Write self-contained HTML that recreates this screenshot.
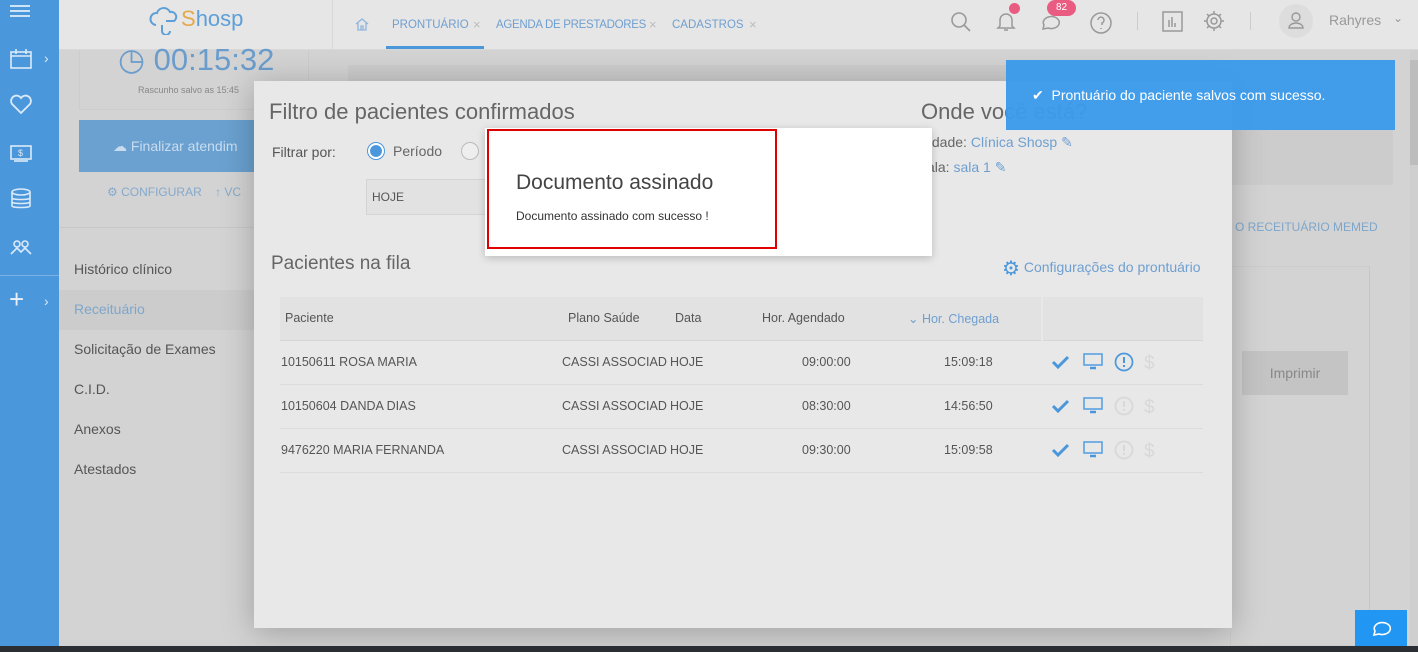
<!DOCTYPE html>
<html><head><meta charset="utf-8"><style>
*{box-sizing:border-box;margin:0;padding:0}
body{width:1418px;height:652px;overflow:hidden;position:relative;background:#d3d3d3;font-family:"Liberation Sans",sans-serif;color:#555}
.a{position:absolute;white-space:nowrap}
.side{left:0;top:0;width:59px;height:646px;background:#4a97dc}
.side svg{position:absolute;left:9px}
.hdr{left:59px;top:0;width:1359px;height:50px;background:#e6e6e6;border-bottom:1px solid #d8d8d8}
.tab{font-size:12px;color:#6f9fd0;top:19px}
.x{color:#bbb;font-size:13px;top:17px}
.c{font-size:12.5px;color:#555}
</style></head><body>
<div class="a side">
 <div class="a" style="left:10px;top:5px;width:20px;height:2px;background:#cfe3f6;box-shadow:0 5px 0 #cfe3f6,0 10px 0 #cfe3f6"></div>
 <svg style="top:48px" width="24" height="22" viewBox="0 0 24 22" fill="none" stroke="#dbeaf8" stroke-width="1.6"><rect x="2" y="4" width="20" height="16"/><path d="M2 8h20M7 1v5M17 1v5"/></svg>
 <div class="a" style="left:44px;top:50px;color:#dbeaf8;font-size:14px">›</div>
 <svg style="top:93px" width="24" height="22" viewBox="0 0 24 22" fill="none" stroke="#dbeaf8" stroke-width="1.8"><path d="M12 20L3 11a5 5 0 0 1 9-6a5 5 0 0 1 9 6z"/></svg>
 <svg style="top:143px" width="24" height="20" viewBox="0 0 24 20" fill="none" stroke="#dbeaf8" stroke-width="1.6"><rect x="2" y="3" width="20" height="13"/><path d="M5 18h14"/><text x="9" y="13" font-size="9" fill="#dbeaf8" stroke="none">$</text></svg>
 <svg style="top:188px" width="24" height="22" viewBox="0 0 24 22" fill="none" stroke="#dbeaf8" stroke-width="1.6"><ellipse cx="12" cy="4" rx="9" ry="3"/><path d="M3 4v14c0 2 18 2 18 0V4M3 10c0 2 18 2 18 0M3 14c0 2 18 2 18 0"/></svg>
 <svg style="top:236px" width="24" height="22" viewBox="0 0 24 22" fill="none" stroke="#dbeaf8" stroke-width="1.6"><circle cx="8" cy="8" r="3"/><circle cx="16" cy="8" r="3"/><path d="M2 18l6-6 4 4 4-4 6 6"/></svg>
 <div class="a" style="left:0;top:275px;width:59px;height:1px;background:#7bb3e6"></div>
 <div class="a" style="left:9px;top:286px;color:#e6f0fa;font-size:26px;line-height:26px">+</div>
 <div class="a" style="left:44px;top:293px;color:#dbeaf8;font-size:14px">›</div>
</div>
<div class="a hdr">
 <div class="a" style="left:273px;top:0;width:1px;height:50px;background:#d8d8d8"></div>
 <svg class="a" style="left:89px;top:5px" width="32" height="30" viewBox="0 0 32 30" fill="none" stroke="#5c9fd9" stroke-width="2"><path d="M8 20a6 6 0 0 1 1-12a7 7 0 0 1 13-1a5 5 0 0 1 4 9H18M14 20v6a4 4 0 0 0 8 0"/></svg>
 <div class="a" style="left:122px;top:6px;font-size:22px;color:#5c9fd9"><span style="color:#e4a94c">S</span>hosp</div>
 <svg class="a" style="left:296px;top:17px" width="14" height="14" viewBox="0 0 14 14" fill="none" stroke="#8fb6dc" stroke-width="1.3"><path d="M1 7l6-5 6 5M3 6v7h8V6M6 13V9h2v4"/></svg>
 <div class="a tab" style="left:333px;font-size:11.5px">PRONTUÁRIO</div><div class="a x" style="left:414px">×</div>
 <div class="a" style="left:327px;top:46px;width:98px;height:3px;background:#4a97dc"></div>
 <div class="a tab" style="left:437px;font-size:11.5px;letter-spacing:-.3px">AGENDA DE PRESTADORES</div><div class="a x" style="left:590px">×</div>
 <div class="a tab" style="left:613px;font-size:11.5px">CADASTROS</div><div class="a x" style="left:690px">×</div>
 <svg class="a" style="left:890px;top:10px" width="24" height="24" fill="none" stroke="#999" stroke-width="1.6"><circle cx="10" cy="10" r="7"/><path d="M15 15l6 6"/></svg>
 <svg class="a" style="left:937px;top:10px" width="20" height="22" fill="none" stroke="#999" stroke-width="1.5"><path d="M4 16V10a6 6 0 0 1 12 0v6l2 2H2zM8 20h4"/></svg>
 <div class="a" style="left:950px;top:3px;width:11px;height:11px;border-radius:50%;background:#ea5b82"></div>
 <svg class="a" style="left:980px;top:12px" width="24" height="20" fill="none" stroke="#999" stroke-width="1.5"><path d="M4 17l1-4a8 6 0 1 1 4 3z"/></svg>
 <div class="a" style="left:988px;top:0;width:29px;height:16px;border-radius:8px;background:#ea5b82;color:#fff;font-size:10px;text-align:center;line-height:15px">82</div>
 <svg class="a" style="left:1030px;top:11px" width="24" height="24" fill="none" stroke="#999" stroke-width="1.5"><circle cx="12" cy="12" r="10"/><path d="M9 9a3 3 0 1 1 4 3v2M12 17v1"/></svg>
 <div class="a" style="left:1078px;top:12px;width:1px;height:18px;background:#ccc"></div>
 <svg class="a" style="left:1103px;top:11px" width="22" height="22" fill="none" stroke="#999" stroke-width="1.5"><rect x="1" y="1" width="19" height="19"/><path d="M7 16V9M10 16V6M13 16v-4"/></svg>
 <svg class="a" style="left:1143px;top:9px" width="24" height="24" fill="none" stroke="#999" stroke-width="1.5"><circle cx="12" cy="12" r="3"/><path d="M12 2v3M12 19v3M2 12h3M19 12h3M5 5l2 2M17 17l2 2M5 19l2-2M17 7l2-2"/><circle cx="12" cy="12" r="7"/></svg>
 <div class="a" style="top:12px;width:1px;height:18px;background:#ccc;left:1191px"></div>
 <div class="a" style="left:1220px;top:4px;width:34px;height:34px;border-radius:50%;background:#ddd"></div>
 <svg class="a" style="left:1228px;top:10px" width="18" height="20" fill="none" stroke="#999" stroke-width="1.4"><circle cx="9" cy="7" r="4"/><path d="M2 18a7 5 0 0 1 14 0z"/></svg>
 <div class="a" style="left:1270px;top:12px;font-size:14px;color:#999">Rahyres</div>
 <div class="a" style="left:1334px;top:11px;font-size:12px;color:#999">⌄</div>
</div>
<!-- background page (dimmed) -->
<div class="a" style="left:79px;top:50px;width:230px;height:60px;border:1px solid #ccc;border-top:0"></div>
<div class="a" style="left:118px;top:42px;font-size:31px;color:#6a9ccc">◷ 00:15:32</div>
<div class="a" style="left:138px;top:85px;font-size:9px;color:#888">Rascunho salvo as 15:45</div>
<div class="a" style="left:79px;top:120px;width:180px;height:52px;background:#6aa1d0"></div>
<div class="a" style="left:113px;top:138px;font-size:14px;color:#c9dcef">☁ Finalizar atendim</div>
<div class="a" style="left:107px;top:185px;font-size:12px;color:#86a9cc">⚙ CONFIGURAR &nbsp;&nbsp;&nbsp;↑ VC</div>
<div class="a" style="left:59px;top:227px;width:200px;height:1px;background:#c8c8c8"></div>
<div class="a" style="left:59px;top:290px;width:200px;height:40px;background:rgba(0,0,0,.03)"></div>
<div class="a" style="left:74px;top:249px;font-size:14px;color:#555;line-height:40px">Histórico clínico<br><span style="color:#7ea6cc">Receituário</span><br>Solicitação de Exames<br>C.I.D.<br>Anexos<br>Atestados</div>
<div class="a" style="left:348px;top:65px;width:1045px;height:120px;background:#ccc"></div>
<div class="a" style="left:1235px;top:220px;font-size:12px;color:#7ea6cc">O RECEITUÁRIO MEMED</div>
<div class="a" style="left:1230px;top:266px;width:140px;height:380px;border:1px solid #ccc;border-right:1px solid #c6c6c6"></div>
<div class="a" style="left:1242px;top:351px;width:106px;height:44px;background:#c4c4c4;color:#888;font-size:14px;text-align:center;line-height:44px">Imprimir</div>
<div class="a" style="left:1410px;top:50px;width:8px;height:596px;background:#cfcfcf"></div>
<div class="a" style="left:1410px;top:60px;width:8px;height:105px;background:#bdbdbd"></div>
<!-- modal -->
<div class="a" style="left:254px;top:81px;width:978px;height:547px;background:#e8e8e8;box-shadow:0 4px 30px rgba(0,0,0,.25)">
 <div class="a" style="left:15px;top:18px;font-size:22px;color:#666">Filtro de pacientes confirmados</div>
 <div class="a" style="left:667px;top:18px;font-size:22px;color:#666">Onde você está?</div>
 <div class="a" style="left:667px;top:53px;font-size:14px;color:#666">nidade: <span style="color:#6f9fd0">Clínica Shosp ✎</span></div>
 <div class="a" style="left:673px;top:78px;font-size:14px;color:#666">ala: <span style="color:#6f9fd0">sala 1 ✎</span></div>
 <div class="a" style="left:18px;top:63px;font-size:14px;color:#555">Filtrar por:</div>
 <div class="a" style="left:113px;top:61px;width:18px;height:18px;border-radius:50%;border:1px solid #4a97dc;background:radial-gradient(#4a97dc 50%,#fff 55%)"></div>
 <div class="a" style="left:139px;top:62px;font-size:14px;color:#666">Período</div>
 <div class="a" style="left:207px;top:61px;width:18px;height:18px;border-radius:50%;border:1px solid #bbb;background:#eee"></div>
 <div class="a" style="left:112px;top:98px;width:130px;height:36px;border:1px solid #d4d4d4;background:#e2e2e2;font-size:12px;color:#555;padding:10px 5px">HOJE</div>
 <div class="a" style="left:17px;top:172px;font-size:19px;color:#666">Pacientes na fila</div>
 <div class="a" style="left:748px;top:175px;font-size:14px;color:#6f9fd0"><span style="color:#4a97dc;font-size:20px;vertical-align:-3px">⚙</span> Configurações do prontuário</div>
</div>
<!-- table -->
<div class="a" style="left:280px;top:297px;width:923px;height:44px;background:#e2e2e2;border-bottom:1px solid #d6d6d6"></div>
<div class="a" style="left:1041px;top:297px;width:2px;height:44px;background:#e8e8e8"></div>
<div class="a c" style="left:285px;top:311px">Paciente</div>
<div class="a c" style="left:568px;top:311px">Plano Saúde</div>
<div class="a c" style="left:675px;top:311px">Data</div>
<div class="a c" style="left:762px;top:311px">Hor. Agendado</div>
<div class="a c" style="left:908px;top:311px;color:#6f9fd0">⌄ Hor. Chegada</div>
<div class="a" style="left:280px;top:384px;width:923px;height:1px;background:#dcdcdc"></div>
<div class="a" style="left:280px;top:428px;width:923px;height:1px;background:#dcdcdc"></div>
<div class="a" style="left:280px;top:472px;width:923px;height:1px;background:#dcdcdc"></div>
<div class="a c" style="left:281px;top:355px">10150611 ROSA MARIA</div>
<div class="a c" style="left:281px;top:399px">10150604 DANDA DIAS</div>
<div class="a c" style="left:281px;top:443px">9476220 MARIA FERNANDA</div>
<div class="a c" style="left:562px;top:355px;line-height:44px;top:340px">CASSI ASSOCIAD<br>CASSI ASSOCIAD<br>CASSI ASSOCIAD</div>
<div class="a c" style="left:670px;top:340px;line-height:44px;width:98px;overflow:hidden">HOJE<br>HOJE<br>HOJE</div>
<div class="a c" style="left:802px;top:340px;line-height:44px">09:00:00<br>08:30:00<br>09:30:00</div>
<div class="a c" style="left:944px;top:340px;line-height:44px">15:09:18<br>14:56:50<br>15:09:58</div>
<svg class="a" style="left:1050px;top:350px" width="110" height="120" viewBox="0 0 110 120">
 <g id="r">
 <path d="M3 12l5 5 10-10" stroke="#4a97dc" stroke-width="3" fill="none"/>
 <rect x="34" y="4" width="18" height="11" fill="none" stroke="#5aa2e0" stroke-width="1.6"/><path d="M40 18h6" stroke="#4a97dc" stroke-width="2.5"/>
 </g>
 <use href="#r" y="44"/><use href="#r" y="88"/>
 <circle cx="74" cy="12" r="8.5" fill="none" stroke="#4a97dc" stroke-width="1.7"/><path d="M74 7v6M74 15v2" stroke="#4a97dc" stroke-width="2"/>
 <circle cx="74" cy="56" r="8.5" fill="none" stroke="#d8d8d8" stroke-width="1.7"/><path d="M74 51v6M74 59v2" stroke="#d8d8d8" stroke-width="2"/>
 <circle cx="74" cy="100" r="8.5" fill="none" stroke="#d8d8d8" stroke-width="1.7"/><path d="M74 95v6M74 103v2" stroke="#d8d8d8" stroke-width="2"/>
 <text x="94" y="19" font-size="19" fill="#d8d8d8" font-family="Liberation Sans">$</text>
 <text x="94" y="63" font-size="19" fill="#d8d8d8" font-family="Liberation Sans">$</text>
 <text x="94" y="107" font-size="19" fill="#d8d8d8" font-family="Liberation Sans">$</text>
</svg>
<!-- dialog -->
<div class="a" style="left:485px;top:128px;width:447px;height:128px;background:#fff;box-shadow:0 2px 8px rgba(0,0,0,.2)"></div>
<div class="a" style="left:487px;top:129px;width:290px;height:120px;border:2px solid #e00000"></div>
<div class="a" style="left:516px;top:171px;font-size:21px;color:#444">Documento assinado</div>
<div class="a" style="left:516px;top:209px;font-size:12px;color:#333">Documento assinado com sucesso !</div>
<!-- toast -->
<div class="a" style="left:1006px;top:60px;width:389px;height:70px;background:#3c9be9;opacity:.97"></div>
<div class="a" style="left:1032px;top:87px;font-size:14px;color:#fff">✔ &nbsp;Prontuário do paciente salvos com sucesso.</div>
<!-- chat -->
<div class="a" style="left:1355px;top:610px;width:52px;height:36px;background:#2196f3"></div>
<svg class="a" style="left:1370px;top:619px" width="22" height="18" fill="none" stroke="#fff" stroke-width="1.6"><path d="M4 16l1-4a8 6 0 1 1 4 3z"/></svg>
<div class="a" style="left:0;top:646px;width:1418px;height:6px;background:#2b2e33"></div>
</body></html>
